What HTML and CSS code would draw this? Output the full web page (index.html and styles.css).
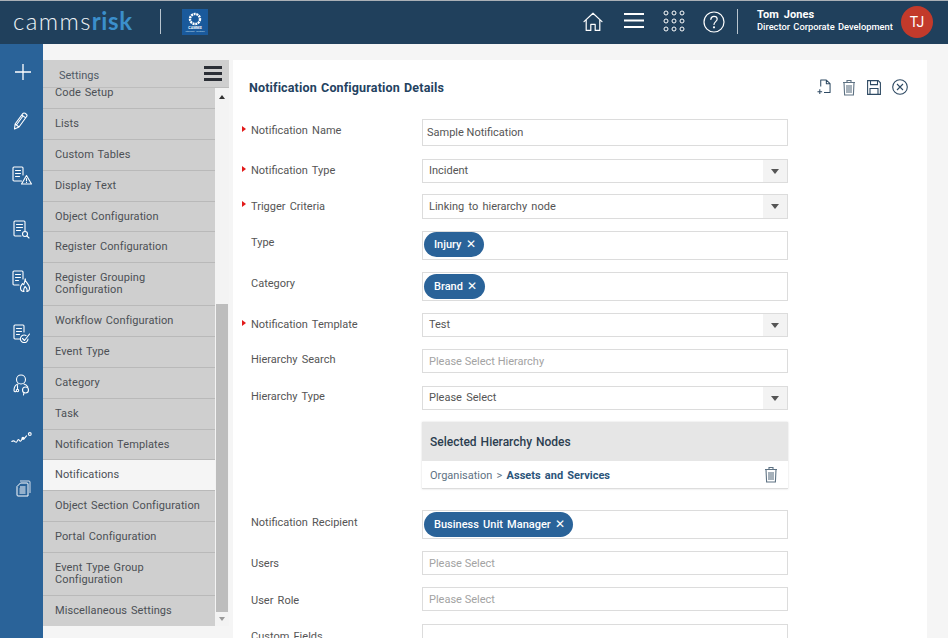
FILE: index.html
```html
<!DOCTYPE html>
<html lang="en">
<head>
<meta charset="utf-8">
<title>Notification Configuration Details</title>
<link rel="stylesheet" href="styles.css">
</head>
<body>
<header class="topbar">
  <div class="brand"><span class="camms">camms</span><span class="risk">risk</span></div>
  <div class="vsep brand-sep"></div>
  <div class="client-logo">
    <svg width="26" height="26" viewBox="0 0 26 26"><rect width="26" height="26" fill="#1a5a9c"/><circle cx="13" cy="10" r="5" fill="none" stroke="#fff" stroke-width="2.4" stroke-dasharray="2 .7"/><text x="13" y="19.5" text-anchor="middle" font-size="3.6" font-weight="700" fill="#fff" font-family="Roboto">CAMMS</text><text x="13" y="23" text-anchor="middle" font-size="2" fill="#cfe0f0" font-family="Roboto">Intelligent solutions</text></svg>
  </div>
  <div class="top-actions">
    <svg class="top-home" width="20" height="20" viewBox="0 0 20 20" fill="none" stroke="#fff" stroke-width="1.2" stroke-linejoin="round" stroke-linecap="round"><path d="M1 9.6 10 1.2l9 8.4M3.2 8v10.4h4.6v-6h4.4v6h4.6V8"/></svg>
    <svg class="top-menu" width="20" height="15" viewBox="0 0 20 15" fill="#fff"><rect y="0" width="20" height="2"/><rect y="6.5" width="20" height="2"/><rect y="13" width="20" height="2"/></svg>
    <svg class="top-grid" width="22" height="22" viewBox="0 0 22 22" fill="none" stroke="#fff" stroke-width="1"><circle cx="3" cy="3" r="2"/><circle cx="11" cy="3" r="2"/><circle cx="19" cy="3" r="2"/><circle cx="3" cy="11" r="2"/><circle cx="11" cy="11" r="2"/><circle cx="19" cy="11" r="2"/><circle cx="3" cy="19" r="2"/><circle cx="11" cy="19" r="2"/><circle cx="19" cy="19" r="2"/></svg>
    <svg class="top-help" width="22" height="22" viewBox="0 0 22 22" fill="none" stroke="#fff" stroke-width="1.2" stroke-linecap="round"><circle cx="11" cy="11" r="10"/><path d="M7.8 8.4C7.9 6.4 9.3 5.3 11 5.3c1.9 0 3.2 1.2 3.2 2.8 0 2.5-3.2 2.6-3.2 5.4"/><circle cx="11" cy="16.3" r=".5" fill="#fff"/></svg>
    <div class="vsep user-sep"></div>
    <div class="user">
      <div class="user-name">Tom Jones</div>
      <div class="user-role">Director Corporate Development</div>
    </div>
    <div class="avatar">TJ</div>
  </div>
</header>
<div class="layout">
  <nav class="rail">
    <svg class="r-plus" width="16" height="16" viewBox="0 0 16 16" stroke="#fff" stroke-width="1.3"><path d="M8 0v16M0 8h16"/></svg>
    <svg class="r-pencil" width="15" height="18" viewBox="0 0 15 18" fill="none" stroke="#fff" stroke-width="1.1" stroke-linejoin="round"><path d="M1.500 17l.6-5L9.800 1.600c.6-.7 1.400-.8 2.200-.3l1.300 1c.8.6.9 1.400.3 2.200L6 15l-4.500 2zM2.100 12 6 15M8.800 3 12.700 5.900M10 4l-6.600 9"/></svg>
    <svg class="r-tri" width="20" height="19" viewBox="0 0 20 19" fill="none" stroke="#fff" stroke-width="1.1" stroke-linejoin="round" stroke-linecap="round"><path d="M9.500 15H2a1 1 0 0 1-1-1V2a1 1 0 0 1 1-1h8a1 1 0 0 1 1 1v7M3.500 4.500h5M3.500 7.500h5M3.500 10.500h4M14.500 9.500l5 8.500h-10zM14.500 12.500v2.300M14.500 16.200v.3"/></svg>
    <svg class="r-search" width="17" height="19" viewBox="0 0 17 19" fill="none" stroke="#fff" stroke-width="1.1" stroke-linejoin="round" stroke-linecap="round"><path d="M8 16H2a1 1 0 0 1-1-1V2a1 1 0 0 1 1-1h9a1 1 0 0 1 1 1v9M3.500 4.500h6M3.500 7.500h6M3.500 10.500h4"/><circle cx="12" cy="14" r="2.500"/><path d="M13.800 15.800 16 18"/></svg>
    <svg class="r-fire" width="18" height="22" viewBox="0 0 18 22" fill="none" stroke="#fff" stroke-width="1.1" stroke-linejoin="round" stroke-linecap="round"><path d="M7 15H2a1 1 0 0 1-1-1V2a1 1 0 0 1 1-1h8a1 1 0 0 1 1 1v7M3.500 4.500h5M3.500 7.500h5M3.500 10.500h3"/><path d="M13 9c-.3 2.500 4.500 5 4.500 9 0 2-1.300 3.500-2.700 3.500.8-1.800 0-3.500-1.800-5-.8 1.700-2 3-1 5-2 0-3.500-1.700-3.500-3.700 0-2 1.300-3 2-4.300.5.800.8 1.200 1.200 1.300.7-1.800 1-3.800 1.800-5.800z"/></svg>
    <svg class="r-check" width="17" height="19" viewBox="0 0 17 19" fill="none" stroke="#fff" stroke-width="1.1" stroke-linejoin="round" stroke-linecap="round"><path d="M7 15H2a1 1 0 0 1-1-1V2a1 1 0 0 1 1-1h8a1 1 0 0 1 1 1v6M3.500 4.500h5M3.500 7.500h5M3.500 10.500h3"/><path d="M15 15a3.800 3.800 0 1 1-2-3.500"/><path d="M9.500 14.500l2 2L16.500 10"/></svg>
    <svg class="r-doctor" width="18" height="22" viewBox="0 0 18 22" fill="none" stroke="#fff" stroke-width="1.1" stroke-linecap="round" stroke-linejoin="round"><circle cx="8" cy="5.500" r="4.500"/><path d="M5 10C2 11 1 13 1 16.500c0 1 1 1.500 2 1M4.500 11.500V15M11 10c1.500.5 3 1.500 3.800 3"/><circle cx="4.500" cy="16.500" r="1.200"/><circle cx="12.500" cy="16" r="3"/><path d="M11 18.500 10.500 21"/></svg>
    <svg class="r-trend" width="21" height="12" viewBox="0 0 21 12" fill="none" stroke="#fff" stroke-width="1.100" stroke-linecap="round"><path d="M.8 9.500c1.500-1.300 2.500-.6 3.500.4 1 .8 1.500.2 2-1 .5-1.200 1.200-1.800 2-.6.5 1 1.200 1.200 1.800.4l1.400-2.200 1.500.4 2.500-3"/><circle cx="12" cy="6.200" r="1" fill="#fff"/><circle cx="18.800" cy="2" r="1.400"/></svg>
    <svg class="r-copy" width="15" height="17" viewBox="0 0 15 17" fill="none" stroke="#fff" stroke-width="1"><path d="M4 1h9a1 1 0 0 1 1 1v11" stroke-opacity=".8"/><path d="M4.500 3H11a1 1 0 0 1 1 1v12H2a1 1 0 0 1-1-1V6.500z" fill="#2a6399"/><path d="M4 7h5.500M3.500 9h6M3.500 11h6M3.500 13h6"/></svg>
  </nav>
  <aside class="settings">
    <div class="settings-head">
      <span>Settings</span>
      <svg width="18" height="15" viewBox="0 0 18 15" fill="#2b2f36"><rect width="18" height="3"/><rect y="6" width="18" height="3"/><rect y="12" width="18" height="3"/></svg>
    </div>
    <div class="settings-body">
      <ul class="menu">
        <li class="first">Code Setup</li>
        <li>Lists</li>
        <li>Custom Tables</li>
        <li>Display Text</li>
        <li>Object Configuration</li>
        <li>Register Configuration</li>
        <li class="two">Register Grouping Configuration</li>
        <li>Workflow Configuration</li>
        <li>Event Type</li>
        <li>Category</li>
        <li>Task</li>
        <li>Notification Templates</li>
        <li class="active">Notifications</li>
        <li>Object Section Configuration</li>
        <li>Portal Configuration</li>
        <li class="two">Event Type Group Configuration</li>
        <li>Miscellaneous Settings</li>
      </ul>
      <div class="scrollbar">
        <span class="arrow up"></span>
        <div class="track"><div class="thumb"></div></div>
        <span class="arrow down"></span>
      </div>
    </div>
  </aside>
  <main class="panel">
    <div class="panel-head">
      <h1>Notification Configuration Details</h1>
      <div class="tools">
        <svg width="14" height="16" viewBox="0 0 15 17" fill="none" stroke="#2e4a63" stroke-width="1.100" stroke-linejoin="round"><path d="M4 8V1h6l4 4v9.500H7.500M10 1v4h4M.5 13.500h5M3 11v5"/></svg>
        <svg width="14" height="17" viewBox="0 0 14 17" fill="none" stroke="#5e7283" stroke-width="1.100"><path d="M1 3.500h12M5 3.500V1.500h4v2M2 3.500l.6 12.500h8.800l.6-12.500M5 6v8M7 6v8M9 6v8"/></svg>
        <svg width="14" height="15" viewBox="0 0 14 15" fill="none" stroke="#2e4a63" stroke-width="1.100"><path d="M.6.600h10.600l2.200 2.200v11.600H.6zM3.500.600v4h7v-4M3 14.400V8.500h8v5.900"/></svg>
        <svg width="16" height="16" viewBox="0 0 16 16" fill="none" stroke="#2e4a63" stroke-width="1.100"><circle cx="8" cy="8" r="7.300"/><path d="M5 5l6 6M11 5l-6 6"/></svg>
      </div>
    </div>
    <form class="form">
      <div class="row gap-13">
        <label class="req">Notification Name</label>
        <div class="field h27 plain-value">Sample Notification</div>
      </div>
      <div class="row gap-11">
        <label class="req">Notification Type</label>
        <div class="field select h24"><span>Incident</span><i class="caret"></i></div>
      </div>
      <div class="row">
        <label class="req lo">Trigger Criteria</label>
        <div class="field select h25"><span>Linking to hierarchy node</span><i class="caret"></i></div>
      </div>
      <div class="row">
        <label>Type</label>
        <div class="field tags up"><span class="tag">Injury <b>✕</b></span></div>
      </div>
      <div class="row">
        <label>Category</label>
        <div class="field tags"><span class="tag">Brand <b>✕</b></span></div>
      </div>
      <div class="row">
        <label class="req">Notification Template</label>
        <div class="field select h24"><span>Test</span><i class="caret"></i></div>
      </div>
      <div class="row gap-13">
        <label class="hi">Hierarchy Search</label>
        <div class="field h24 placeholder">Please Select Hierarchy</div>
      </div>
      <div class="row">
        <label class="hi">Hierarchy Type</label>
        <div class="field select h24"><span>Please Select</span><i class="caret"></i></div>
      </div>
      <div class="row gap-21">
        <div class="spacer"></div>
        <section class="nodes">
          <h2>Selected Hierarchy Nodes</h2>
          <div class="node">
            <span class="node-path">Organisation &gt; <strong>Assets and Services</strong></span>
            <svg width="14" height="17" viewBox="0 0 14 17" fill="none" stroke="#5e7283" stroke-width="1.100"><path d="M1 3.500h12M5 3.500V1.500h4v2M2 3.500l.6 12.500h8.800l.6-12.500M5 6v8M7 6v8M9 6v8"/></svg>
          </div>
        </section>
      </div>
      <div class="row">
        <label class="lo">Notification Recipient</label>
        <div class="field tags h30"><span class="tag">Business Unit Manager <b>✕</b></span></div>
      </div>
      <div class="row">
        <label class="lo">Users</label>
        <div class="field h24 placeholder">Please Select</div>
      </div>
      <div class="row gap-13">
        <label class="lo2">User Role</label>
        <div class="field h24 placeholder">Please Select</div>
      </div>
      <div class="row">
        <label class="lo">Custom Fields</label>
        <div class="field h24"></div>
      </div>
    </form>
  </main>
</div>
</body>
</html>
```
FILE: styles.css
```css
* { box-sizing: border-box; }
html, body { margin: 0; height: 100%; overflow: hidden; }
body { font-family: Roboto, "Noto Sans", sans-serif; font-size: 11px; color: #555; background: #f5f5f5; word-spacing: 1.5px; letter-spacing: 0; }

.topbar { height: 44px; background: #20405c; border-top: 1px solid #aab0b6; display: flex; align-items: center; color: #fff; padding-left: 13px; }
.brand { width: 147px; font-family: Lato, Roboto, sans-serif; font-size: 24px; letter-spacing: .6px; word-spacing: 0; line-height: 1; margin-top: -3px; }
.camms { font-weight: 300; color: #eef3f7; letter-spacing: 1.4px; }
.risk { font-weight: 700; color: #3b8fcb; }
.vsep { width: 1px; background: #b9c5cf; height: 25px; }
.brand-sep { margin-right: 21px; margin-top: -3px; }
.client-logo { width: 26px; height: 26px; margin-top: -2px; }
.client-logo svg { display: block; }
.top-actions { margin-left: auto; display: flex; align-items: center; padding-right: 15px; }
.top-home { margin-right: 21px; margin-top: -2px; }
.top-menu { margin-right: 19px; margin-top: -5px; }
.top-grid { margin-right: 18px; margin-top: -3px; }
.top-help { margin-right: 12px; margin-top: -2px; }
.user-sep { margin-right: 19px; margin-top: -3px; }
.user { width: 144px; margin-top: -3px; }
.user-name { font-size: 11px; font-weight: 700; line-height: 12px; letter-spacing: .1px; word-spacing: 2px; }
.user-role { font-size: 9.300px; font-weight: 500; line-height: 12px; word-spacing: 1px; white-space: nowrap; }
.avatar { width: 32px; height: 32px; border-radius: 50%; background: #c33a2b; display: flex; align-items: center; justify-content: center; font-size: 14px; word-spacing: 0; margin-top: -2px; }

.layout { display: flex; height: 594px; }
.rail { width: 43px; flex: none; background: #2a6399; display: flex; flex-direction: column; align-items: center; padding-top: 20px; }
.rail svg { flex: none; }
.r-plus { margin-left: 2px; margin-bottom: 32px; }
.r-pencil { margin-left: -3px; margin-bottom: 36px; }
.r-tri { margin-left: 0; margin-bottom: 35px; }
.r-search { margin-left: 0; margin-bottom: 31px; }
.r-fire { margin-left: -1px; margin-bottom: 32px; }
.r-check { margin-left: -1px; margin-bottom: 31px; }
.r-doctor { margin-left: 0; margin-bottom: 36px; }
.r-trend { margin-bottom: 36px; }
.r-copy { margin-left: 3px; }

.settings { width: 186px; flex: none; margin-top: 16px; height: 566px; display: flex; flex-direction: column; }
.settings-head { height: 28px; flex: none; background: #cfcfcf; border-bottom: 1px solid #bdbdbd; display: flex; align-items: center; justify-content: space-between; padding: 0 7px 0 16px; color: #4f5a66; font-size: 11px; }
.settings-head span { padding-top: 3px; }
.settings-body { flex: 1; display: flex; min-height: 0; overflow: hidden; }
.menu { list-style: none; margin: 0; padding: 0; flex: 1; overflow: hidden; background: #cfcfcf; letter-spacing: .1px; word-spacing: 1px; }
.menu li { min-height: 30.850px; padding: 9px 12px 8px 12px; line-height: 12px; border-bottom: 1px solid #b9b9b9; color: #4c4f55; background: #cfcfcf; }
.menu li.first { min-height: 22px; padding-top: 0; padding-bottom: 8px; margin-top: -1px; }
.menu li.two { min-height: 43px; padding-top: 9px; }
.menu li.active { background: #f5f5f5; }
.scrollbar { width: 14px; flex: none; background: #f3f3f3; display: flex; flex-direction: column; align-items: center; }
.arrow { width: 0; height: 0; border-left: 3.500px solid transparent; border-right: 3.500px solid transparent; flex: none; }
.arrow.up { border-bottom: 4px solid #333; margin: 7px 0 5px; }
.arrow.down { border-top: 4px solid #9a9a9a; margin: 5px 0 5px; }
.track { flex: 1; width: 100%; padding: 200px 1px 0; min-height: 0; }
.thumb { height: 100%; background: #bdbdbd; }

.panel { width: 694px; flex: none; margin: 16px 0 0 4px; background: #fff; padding: 0 139px 0 18px; overflow: hidden; }
.panel-head { height: 59px; display: flex; align-items: center; margin-right: -120px; justify-content: space-between; padding-bottom: 5px; }
.panel-head h1 { margin: 0 0 0 -2px; font-size: 12.500px; font-weight: 700; color: #24425f; letter-spacing: .15px; word-spacing: 1px; }
.tools { display: flex; align-items: center; gap: 11px; }

.row { display: flex; margin-bottom: 12px; }
.row.gap-11 { margin-bottom: 11px; }
.row.gap-13 { margin-bottom: 13px; }
.row.gap-21 { margin-bottom: 21px; }
label, .spacer { width: 171px; flex: none; padding-top: 5px; position: relative; color: #555; line-height: 13px; }
label.lo { padding-top: 6px; }
label.lo2 { padding-top: 7px; }
label.hi { padding-top: 4px; }
label.req::before { content: ""; position: absolute; left: -9px; top: 7px; border-left: 4px solid #e21a1a; border-top: 3.500px solid transparent; border-bottom: 3.500px solid transparent; }
.field { width: 366px; flex: none; border: 1px solid #dcdcdc; background: #fff; min-height: 24px; display: flex; align-items: center; padding: 0 6px; color: #555; }
.h24 { height: 24px; }
.h25 { height: 25px; }
.h27 { height: 27px; }
.h30 { height: 30px; }
.plain-value { padding-left: 4px; word-spacing: 0; }
.placeholder { color: #a3a3a3; word-spacing: 0; }
.select { padding-right: 0; justify-content: space-between; }
.select.h24 span { margin-top: -2px; }
.caret { width: 24px; flex: none; height: 100%; display: flex; align-items: center; justify-content: center; background: #f3f3f3; }
.caret::after { content: ""; border-top: 5px solid #555; border-left: 4px solid transparent; border-right: 4px solid transparent; }
.tags { height: 29px; padding: 0 1px; }
.tags.up { padding-bottom: 2px; }
.tag { height: 25px; border-radius: 13px; background: #2a6399; color: #fff; padding: 0 8px 1px 10px; display: inline-flex; align-items: center; font-weight: 500; line-height: 1; white-space: pre; }
.tag b { font-weight: 400; font-size: 12px; word-spacing: 0; }

.nodes { width: 366px; flex: none; height: 67px; box-shadow: 0 0 2px #d8d8d8; border-bottom: 1px solid #ddd; }
.nodes h2 { margin: 0; height: 39px; background: #e6e6e6; display: flex; align-items: center; padding-left: 8px; font-size: 12px; font-weight: 500; color: #2c3e50; word-spacing: 1px; }
.node { height: 27px; display: flex; align-items: center; justify-content: space-between; padding: 0 10px 0 8px; color: #5e7283; }
.node-path { padding-top: 1px; }
.node strong { font-weight: 700; color: #2c557a; }
```
